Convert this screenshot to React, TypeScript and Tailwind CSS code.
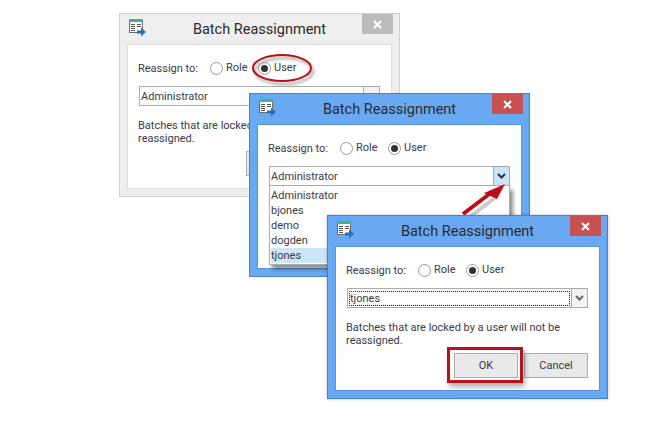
import React from 'react';

const font = { fontFamily: 'Roboto, "Noto Sans", sans-serif' };

const AppIcon = () => (
  <svg width="17" height="18" viewBox="0 0 17 18" className="block">
    <rect x="0.5" y="0.5" width="13" height="13" fill="#fff" stroke="#6a6a6a" />
    <rect x="0" y="0" width="14" height="3" fill="#45b08c" />
    <path d="M2 5.500h4M2 7.500h4M2 9.500h4M2 11.500h4M8 5.500h4M8 7.500h4" stroke="#555" strokeWidth="1" />
    <path d="M8 11.500h4V8.500l5 4.500-5 4.500v-3H8z" fill="#2f6fb8" />
  </svg>
);

const Radio = ({ label, checked }: { label: string; checked?: boolean }) => (
  <div className="flex w-[48px] items-center gap-[3px]">
    <span className="flex h-[13px] w-[13px] items-center justify-center rounded-full border border-[#9a9a9a] bg-white">
      {checked && <span className="h-[7px] w-[7px] rounded-full bg-[#333]" />}
    </span>
    <span className="relative top-[-1px]">{label}</span>
  </div>
);

type DialogProps = {
  className: string;
  active?: boolean;
  value: string;
  focused?: boolean;
  arrowHot?: boolean;
  listOpen?: boolean;
};

const Dialog = ({ className, active, value, focused, arrowHot, listOpen }: DialogProps) => (
  <div
    className={`absolute flex h-[184px] w-[281px] flex-col border ${className} ${
      active ? 'border-[#4a83c4] bg-[#69a9f4]' : 'border-[#cfcfcf] bg-[#eeeeee]'
    }`}
    style={font}
  >
    <div className="relative flex h-[30px] shrink-0 items-center justify-center pt-[2px] text-[14.500px] text-[#2b2b2b]">
      <span className="absolute left-[9px] top-[5px]">
        <AppIcon />
      </span>
      <span>Batch Reassignment</span>
      <span
        className={`absolute right-[6px] top-0 flex h-[20px] w-[31px] items-center justify-center ${
          active ? 'bg-[#c75050]' : 'bg-[#bcbcbc]'
        }`}
      >
        <svg width="9" height="9" viewBox="0 0 9 9">
          <path d="M1 1l7 7M8 1l-7 7" stroke="#fff" strokeWidth="2" />
        </svg>
      </span>
    </div>
    <div
      className={`relative mx-[7px] flex h-[145px] flex-col border px-[10px] pt-[14px] text-[11px] leading-[13px] text-[#3a3a4a] ${
        active ? 'border-[#5a93d8] bg-white' : 'border-[#dcdcdc] bg-white'
      }`}
    >
      <div className="flex h-[18px] items-center">
        <span className="w-[72px]">Reassign to:</span>
        <Radio label="Role" />
        <Radio label="User" checked />
      </div>
      <div className="mt-[9px] ml-[1px] flex h-[20px] w-[241px] border border-[#ababab] bg-white">
        <div className="flex min-w-0 flex-1 items-center p-px pt-[2px]">
          <span
            className={`flex h-full w-full items-center ${focused ? 'border border-dotted border-[#222]' : ''}`}
          >
            {value}
          </span>
        </div>
        <span
          className={`flex w-[16px] items-center justify-center border-l border-[#ababab] ${
            arrowHot ? 'bg-[#c9e3fb]' : 'bg-[#f2f2f2]'
          }`}
        >
          <svg width="9" height="6" viewBox="0 0 9 6">
            <path d="M1 1l3.500 3.500L8 1" fill="none" stroke={arrowHot ? '#333' : '#666'} strokeWidth="2" />
          </svg>
        </span>
      </div>
      {listOpen ? (
        <ul className="absolute left-[11px] top-[61px] w-[241px] border border-t-0 border-[#ababab] bg-white p-px pt-[2px] text-[11px] leading-[15px] shadow-[3px_4px_4px_rgba(0,0,0,0.45)]">
          <li>Administrator</li>
          <li>bjones</li>
          <li>demo</li>
          <li>dogden</li>
          <li className="bg-[#cde6f7]">tjones</li>
        </ul>
      ) : (
        <>
          <p className="mt-[13px]">
            Batches that are locked by a user will not be
            <br />
            reassigned.
          </p>
          <div className="absolute left-[118px] top-[106px] flex gap-[6px]">
            <button className="h-[25px] w-[64px] border border-[#acacac] bg-[#e9e9e9] text-[#3a3a4a]">OK</button>
            <button className="h-[25px] w-[64px] border border-[#acacac] bg-[#e9e9e9] text-[#3a3a4a]">Cancel</button>
          </div>
        </>
      )}
    </div>
  </div>
);

export default function App() {
  return (
    <div className="relative h-[444px] w-[654px] overflow-hidden bg-white">
      <Dialog className="left-[119px] top-[13px]" value="Administrator" />

      {/* callout round the User radio */}
      <svg className="absolute left-[245px] top-[48px]" width="80" height="44" viewBox="0 0 80 44">
        <defs>
          <filter id="soft" x="-20%" y="-20%" width="140%" height="150%">
            <feGaussianBlur stdDeviation="1.600" />
          </filter>
        </defs>
        <ellipse cx="39" cy="23" rx="29" ry="13" fill="none" stroke="#999" strokeWidth="2" filter="url(#soft)" />
        <ellipse cx="37" cy="20" rx="29" ry="13" fill="none" stroke="#b5121b" strokeWidth="2" />
      </svg>

      <Dialog className="left-[249px] top-[93px]" active value="Administrator" arrowHot listOpen />

      <svg className="absolute left-[460px] top-[180px]" width="50" height="40" viewBox="0 0 50 40">
        <path d="M3 35L32 13" stroke="#999" strokeWidth="4" opacity="0.5" transform="translate(4 4)" />
        <path d="M3 34L32 12" stroke="#c00d14" strokeWidth="4" />
        <path d="M45 4L24 13l13 6z" fill="#c00d14" />
      </svg>

      <Dialog className="left-[327px] top-[215px] shadow-[0_0_3px_rgba(0,0,0,0.25)]" active value="tjones" focused />

      {/* callout round the OK button */}
      <div className="absolute left-[447px] top-[347px] h-[36px] w-[76px] border-[3px] border-[#b5121b] shadow-[2px_4px_5px_rgba(0,0,0,0.3)]" />
    </div>
  );
}
